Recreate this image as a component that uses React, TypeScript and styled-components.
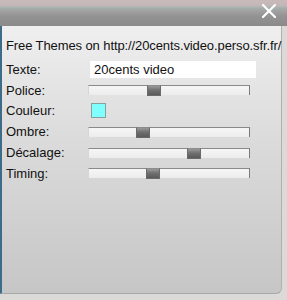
import React from "react";
import styled, { createGlobalStyle } from "styled-components";

const GlobalStyle = createGlobalStyle`
  html, body {
    margin: 0;
    padding: 0;
    width: 287px;
    height: 300px;
    overflow: hidden;
    background: #d8d4d0;
  }
  body {
    font-family: "Liberation Sans", Arial, sans-serif;
  }
`;

const Window = styled.div`
  width: 287px;
  height: 300px;
  display: flex;
  flex-direction: column;
  background: #dcdad8;
`;

const TitleBar = styled.div`
  height: 26px;
  flex-shrink: 0;
  display: flex;
  justify-content: flex-end;
  align-items: flex-start;
  padding-right: 10px;
  box-sizing: border-box;
  background: linear-gradient(
    to bottom,
    #c9baba 0px,
    #c2b6b6 6px,
    #9fb0ae 8px,
    #a4a4a4 10px,
    #939393 16px,
    #8a8a8a 26px
  );
`;

const CloseButton = styled.button`
  border: none;
  background: transparent;
  padding: 0;
  margin-top: 3px;
  width: 16px;
  height: 16px;
  cursor: pointer;
  display: flex;
`;

const Panel = styled.div`
  flex: 1;
  margin-right: 5px;
  margin-bottom: 6px;
  border-left: 2px solid #3d6b88;
  border-right: 1px solid #b0b0b0;
  border-bottom: 1px solid #a8a8a8;
  border-bottom-right-radius: 6px;
  padding: 12px 0 0 4px;
  background: linear-gradient(to bottom, #efefef 0%, #dcdcdc 40%, #c6c6c6 100%);
`;

const Heading = styled.div`
  font-size: 13px;
  letter-spacing: -0.1px;
  color: #111;
  white-space: nowrap;
  line-height: 16px;
  height: 16px;
  margin-bottom: 5px;
`;

const Form = styled.div`
  display: grid;
  grid-template-columns: 82px 1fr;
  grid-auto-rows: 20.8px;
  align-items: center;
`;

const Label = styled.span`
  font-size: 13px;
  color: #111;
  line-height: 15px;
`;

const TextField = styled.input`
  width: 166px;
  height: 17px;
  box-sizing: border-box;
  border: none;
  background: #fff;
  font-family: "Liberation Sans", Arial, sans-serif;
  font-size: 13px;
  padding: 0 0 0 4px;
  margin-left: 2px;
  color: #111;
  outline: none;
`;

const Track = styled.div`
  position: relative;
  width: 162px;
  height: 10px;
  box-sizing: border-box;
  border-top: 1px solid #8a8a8a;
  border-right: 1px solid #7a7a7a;
  border-left: 1px solid #d6d6d6;
  background: linear-gradient(to bottom, #f6f6f6, #ececec);
`;

const Thumb = styled.div<{ $at: number }>`
  position: absolute;
  top: -1px;
  left: ${(p) => p.$at}px;
  width: 14px;
  height: 11px;
  box-sizing: border-box;
  border: 1px solid #6a6a6a;
  border-top-color: #8c8c8c;
  background: linear-gradient(to bottom, #9a9a9a 0%, #707070 45%, #5a5a5a 100%);
`;

const Swatch = styled.div<{ $color: string }>`
  width: 15px;
  height: 15px;
  margin-left: 3px;
  box-sizing: border-box;
  border: 1px solid #8aa0a0;
  background: ${(p) => p.$color};
`;

const Slider = ({ at }: { at: number }) => (
  <Track>
    <Thumb $at={at} />
  </Track>
);

export default function App() {
  return (
    <>
      <GlobalStyle />
      <Window>
        <TitleBar>
          <CloseButton aria-label="close">
            <svg width="16" height="16" viewBox="0 0 16 16">
              <path d="M2 2 L14 14 M14 2 L2 14" stroke="#fff" strokeWidth="2.2" strokeLinecap="round" />
            </svg>
          </CloseButton>
        </TitleBar>
        <Panel>
          <Heading>Free Themes on http://20cents.video.perso.sfr.fr/</Heading>
          <Form>
            <Label>Texte:</Label>
            <TextField defaultValue="20cents video" />
            <Label>Police:</Label>
            <Slider at={58} />
            <Label>Couleur:</Label>
            <Swatch $color="#80ffff" />
            <Label>Ombre:</Label>
            <Slider at={47} />
            <Label>Décalage:</Label>
            <Slider at={98} />
            <Label>Timing:</Label>
            <Slider at={57} />
          </Form>
        </Panel>
      </Window>
    </>
  );
}
